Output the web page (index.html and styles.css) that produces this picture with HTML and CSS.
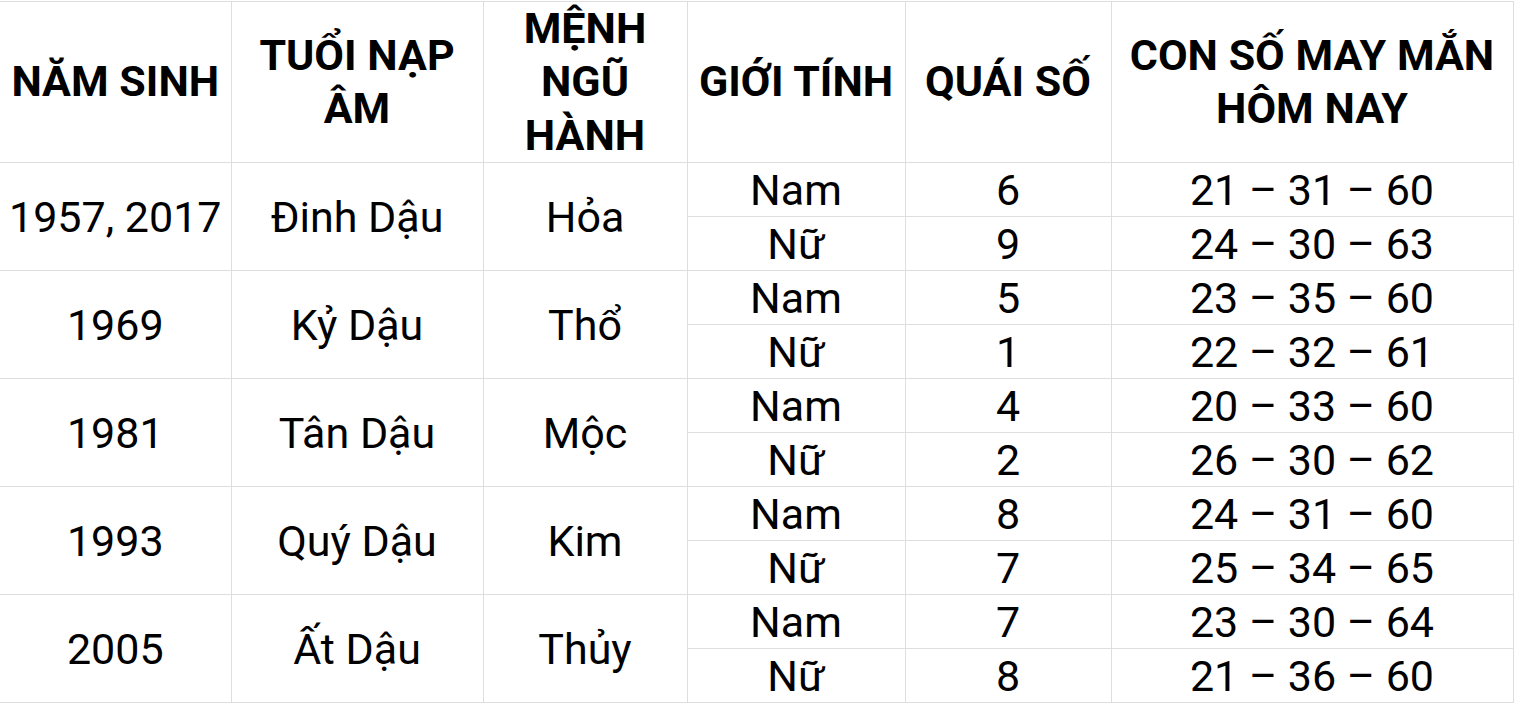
FILE: index.html
```html
<!DOCTYPE html>
<html lang="vi">
<head>
<meta charset="utf-8">
<title>Con số may mắn</title>
<link rel="stylesheet" href="styles.css">
</head>
<body>
<table class="tbl">
  <colgroup>
    <col class="c1"><col class="c2"><col class="c3"><col class="c4"><col class="c5"><col class="c6">
  </colgroup>
  <thead>
    <tr class="head">
      <th class="first">NĂM SINH</th>
      <th>TUỔI NẠP ÂM</th>
      <th>MỆNH NGŨ HÀNH</th>
      <th>GIỚI TÍNH</th>
      <th>QUÁI SỐ</th>
      <th>CON SỐ MAY MẮN HÔM NAY</th>
    </tr>
  </thead>
  <tbody>
    <tr><td class="first" rowspan="2">1957, 2017</td><td rowspan="2">Đinh Dậu</td><td rowspan="2">Hỏa</td><td>Nam</td><td>6</td><td>21 – 31 – 60</td></tr>
    <tr><td>Nữ</td><td>9</td><td>24 – 30 – 63</td></tr>
    <tr><td class="first" rowspan="2">1969</td><td rowspan="2">Kỷ Dậu</td><td rowspan="2">Thổ</td><td>Nam</td><td>5</td><td>23 – 35 – 60</td></tr>
    <tr><td>Nữ</td><td>1</td><td>22 – 32 – 61</td></tr>
    <tr><td class="first" rowspan="2">1981</td><td rowspan="2">Tân Dậu</td><td rowspan="2">Mộc</td><td>Nam</td><td>4</td><td>20 – 33 – 60</td></tr>
    <tr><td>Nữ</td><td>2</td><td>26 – 30 – 62</td></tr>
    <tr><td class="first" rowspan="2">1993</td><td rowspan="2">Quý Dậu</td><td rowspan="2">Kim</td><td>Nam</td><td>8</td><td>24 – 31 – 60</td></tr>
    <tr><td>Nữ</td><td>7</td><td>25 – 34 – 65</td></tr>
    <tr><td class="first" rowspan="2">2005</td><td rowspan="2">Ất Dậu</td><td rowspan="2">Thủy</td><td>Nam</td><td>7</td><td>23 – 30 – 64</td></tr>
    <tr><td>Nữ</td><td>8</td><td>21 – 36 – 60</td></tr>
  </tbody>
</table>
</body>
</html>
```

FILE: styles.css
```css
html, body {
  margin: 0;
  padding: 0;
  background: #fff;
}
body {
  font-family: Roboto, "Liberation Sans", sans-serif;
  color: #000;
  overflow: hidden;
}
.tbl {
  margin-top: 1px;
  border-collapse: collapse;
  table-layout: fixed;
  width: 1513px;
}
.c1 { width: 231px; }
.c2 { width: 252px; }
.c3 { width: 204px; }
.c4 { width: 218px; }
.c5 { width: 206px; }
.c6 { width: 402px; }
.tbl th, .tbl td {
  border: 1px solid #dedede;
  padding: 0;
  text-align: center;
  vertical-align: middle;
}
.tbl .first {
  border-left: none;
}
.tbl th {
  font-weight: 700;
  font-size: 43px;
  line-height: 53.4px;
  height: 160px;
}
.tbl td {
  font-size: 43px;
  line-height: 48px;
  height: 53px;
}
```
